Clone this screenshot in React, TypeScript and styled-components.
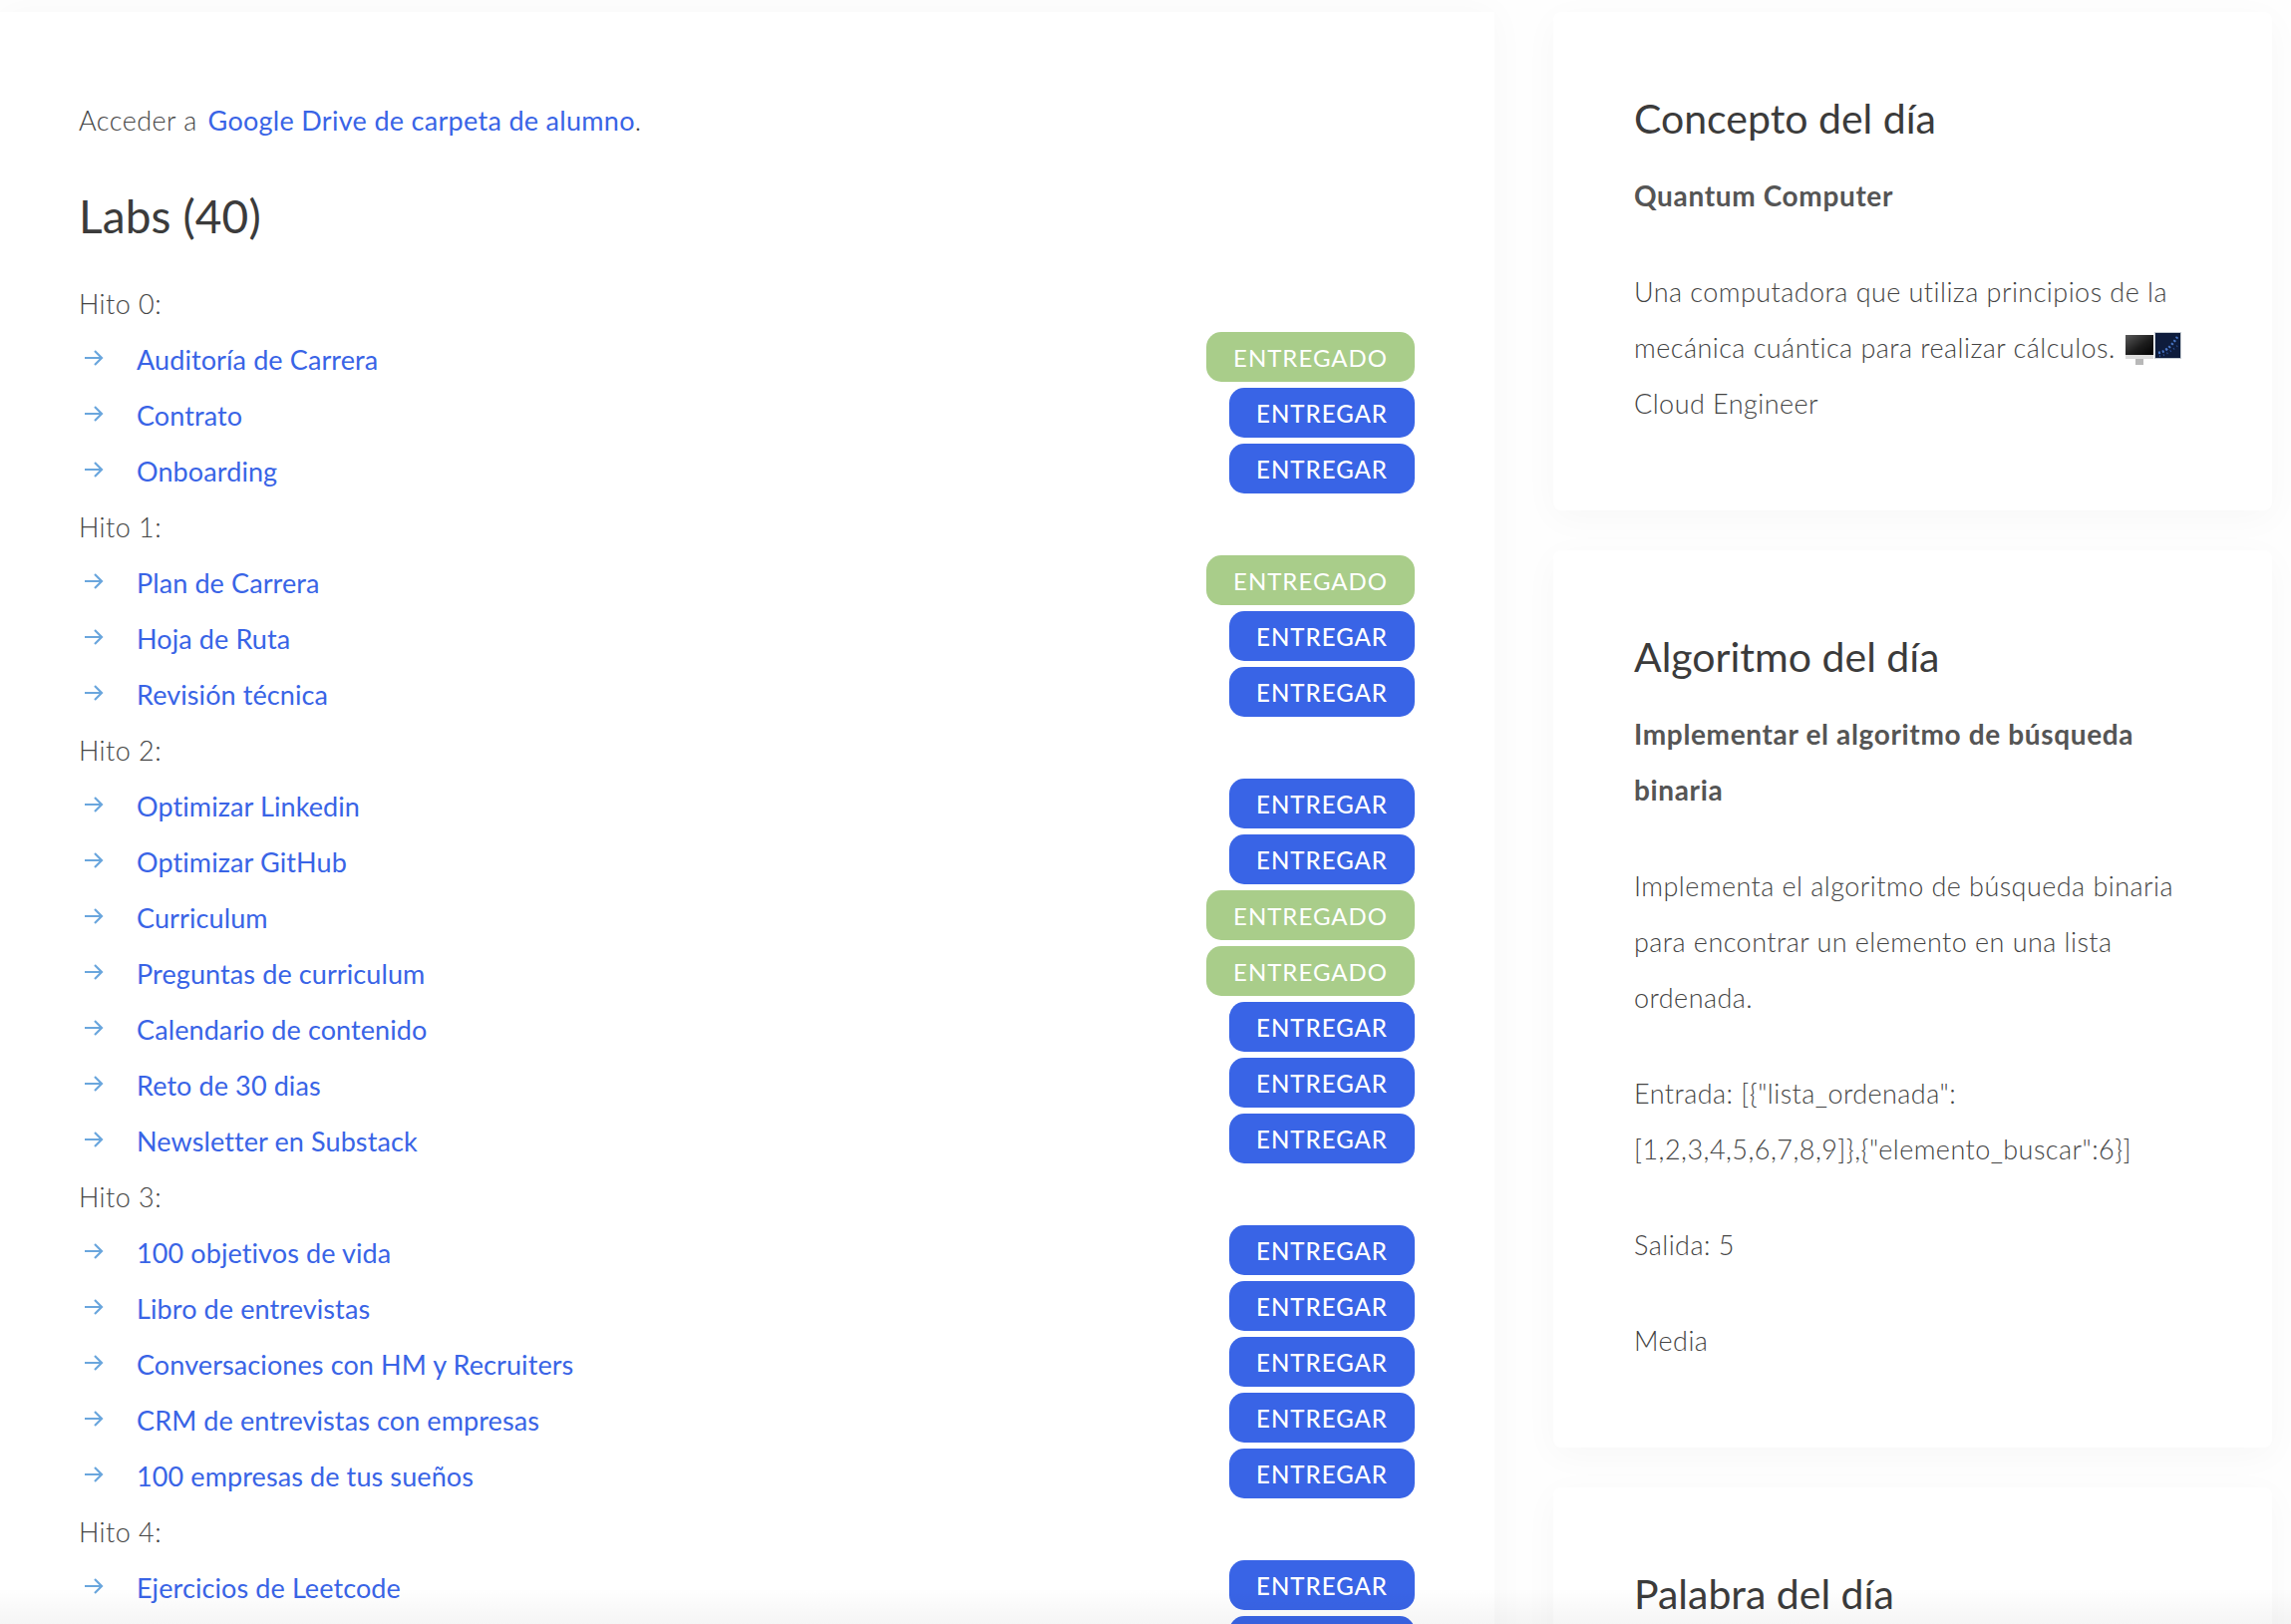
import { ReactElement } from "react";
import styled, { createGlobalStyle } from "styled-components";

const GlobalStyle = createGlobalStyle`
  html, body {
    margin: 0;
    height: 100%;
    overflow: hidden;
    background: #fefefe;
  }
  body {
    font-family: "Lato", "Liberation Sans", sans-serif;
    font-size: 27px;
    font-weight: 300;
    letter-spacing: 0.45px;
    line-height: 56px;
    color: #444444;
  }
  p, h2, h3 {
    margin: 0;
  }
`;

const Page = styled.div`
  position: relative;
  display: grid;
  grid-template-columns: 1499px 1fr;
  height: 1629px;
  padding-top: 12px;
  box-sizing: border-box;
  overflow: hidden;
  background: #fefefe;
`;

const Main = styled.main`
  background: #ffffff;
  box-shadow: 0 0 36px rgba(0, 0, 0, 0.03);
  padding: 81px 80px 0 79px;
`;

const Aside = styled.aside`
  display: flex;
  flex-direction: column;
  gap: 40px;
  padding: 0 19px 0 59px;
`;

const Card = styled.section`
  background: #ffffff;
  border-radius: 8px;
  box-shadow: 0 8px 36px rgba(0, 0, 0, 0.03);
  padding: 79px 60px 79px 81px;
`;

const PageTitle = styled.h2`
  font-size: 46px;
  font-weight: 400;
  letter-spacing: 0.1px;
  line-height: 56px;
  color: #3b3b3b;
  margin: 40px 0 32px;
`;

const CardTitle = styled.h3`
  font-size: 41px;
  font-weight: 400;
  letter-spacing: 0;
  line-height: 56px;
  color: #3b3b3b;
  margin-bottom: 21px;
`;

const Lead = styled.p`
  font-size: 28px;
  font-weight: 700;
  letter-spacing: 0.65px;
  color: #555555;
  margin-bottom: 41px;
`;

const Paragraph = styled.p<{ $last?: boolean }>`
  margin-bottom: ${(p) => (p.$last ? 0 : "40px")};
`;

const Link = styled.a`
  color: #3964e6;
  font-weight: 400;
  letter-spacing: 0.1px;
  text-decoration: none;
`;

const DriveLink = styled(Link)`
  margin-left: 3px;
  letter-spacing: 0.3px;
`;

const Row = styled.div`
  display: flex;
  justify-content: space-between;
  align-items: flex-start;
  height: 56px;
`;

const RowLabel = styled.div`
  display: flex;
  align-items: center;
  height: 56px;
`;

const Arrow = styled.svg`
  width: 20px;
  height: 18px;
  margin: -4px 33px 0 5px;
  flex: none;
`;

const DeliverButton = styled.button<{ $done?: boolean }>`
  height: 50px;
  padding: 0 27px;
  border: 0;
  border-radius: 15px;
  background: ${(p) => (p.$done ? "#a9cd8a" : "#3964e6")};
  color: #ffffff;
  font-family: inherit;
  font-size: 24px;
  font-weight: ${(p) => (p.$done ? 400 : 500)};
  letter-spacing: 1px;
  line-height: 52px;
`;

const Emoji = styled.svg`
  width: 56px;
  height: 34px;
  margin-left: 10px;
  vertical-align: -8px;
`;

const BottomFade = styled.div`
  position: absolute;
  left: 0;
  right: 0;
  bottom: 0;
  height: 36px;
  background: linear-gradient(rgba(0, 0, 0, 0), rgba(0, 0, 0, 0.04));
  pointer-events: none;
`;

type Item = { name: string; done?: boolean };
type Group = { title: string; items: Item[] };

const groups: Group[] = [
  {
    title: "Hito 0:",
    items: [{ name: "Auditoría de Carrera", done: true }, { name: "Contrato" }, { name: "Onboarding" }],
  },
  {
    title: "Hito 1:",
    items: [{ name: "Plan de Carrera", done: true }, { name: "Hoja de Ruta" }, { name: "Revisión técnica" }],
  },
  {
    title: "Hito 2:",
    items: [
      { name: "Optimizar Linkedin" },
      { name: "Optimizar GitHub" },
      { name: "Curriculum", done: true },
      { name: "Preguntas de curriculum", done: true },
      { name: "Calendario de contenido" },
      { name: "Reto de 30 dias" },
      { name: "Newsletter en Substack" },
    ],
  },
  {
    title: "Hito 3:",
    items: [
      { name: "100 objetivos de vida" },
      { name: "Libro de entrevistas" },
      { name: "Conversaciones con HM y Recruiters" },
      { name: "CRM de entrevistas con empresas" },
      { name: "100 empresas de tus sueños" },
    ],
  },
  {
    title: "Hito 4:",
    items: [{ name: "Ejercicios de Leetcode" }, { name: "" }],
  },
];

function LabRow({ name, done }: Item): ReactElement {
  return (
    <Row>
      <RowLabel>
        {name && (
          <Arrow viewBox="0 0 20 18" fill="none" stroke="#6aa6dd" strokeWidth="2.2">
            <path d="M1 9h17M11 2l7 7-7 7" />
          </Arrow>
        )}
        <Link href="#">{name}</Link>
      </RowLabel>
      <DeliverButton $done={done}>{done ? "ENTREGADO" : "ENTREGAR"}</DeliverButton>
    </Row>
  );
}

function ComputerEmoji(): ReactElement {
  return (
    <Emoji viewBox="0 0 56 34">
      <defs>
        <linearGradient id="screen" x1="0" y1="0" x2="1" y2="1">
          <stop offset="0" stopColor="#5a5a5a" />
          <stop offset="0.55" stopColor="#1c1c1c" />
          <stop offset="1" stopColor="#000000" />
        </linearGradient>
      </defs>
      <rect x="0" y="3" width="28" height="20" fill="url(#screen)" />
      <rect x="0" y="23" width="28" height="4" fill="#dcdcdc" />
      <rect x="10" y="27" width="8" height="6" fill="#b8b8b8" />
      <rect x="29.5" y="0.5" width="26" height="26" fill="#0e1c3c" stroke="#c5ccd2" />
      <path d="M33 21c6-1 12-5 19-16" stroke="#4a78c8" strokeWidth="2.5" fill="none" strokeDasharray="2 2" />
      <path d="M34 24c5 0 12-5 18-10" stroke="#2c4f96" strokeWidth="2" fill="none" strokeDasharray="1 3" />
    </Emoji>
  );
}

export default function App(): ReactElement {
  return (
    <>
      <GlobalStyle />
      <Page>
        <Main>
          <p>
            Acceder a <DriveLink href="#">Google Drive de carpeta de alumno</DriveLink>.
          </p>
          <PageTitle>Labs (40)</PageTitle>
          {groups.map((group) => (
            <div key={group.title}>
              <Row>{group.title}</Row>
              {group.items.map((item) => (
                <LabRow key={item.name} {...item} />
              ))}
            </div>
          ))}
        </Main>
        <Aside>
          <Card>
            <CardTitle>Concepto del día</CardTitle>
            <Lead>Quantum Computer</Lead>
            <Paragraph $last>
              Una computadora que utiliza principios de la
              <br />
              mecánica cuántica para realizar cálculos.
              <ComputerEmoji />
              <br />
              Cloud Engineer
            </Paragraph>
          </Card>
          <Card>
            <CardTitle>Algoritmo del día</CardTitle>
            <Lead>
              Implementar el algoritmo de búsqueda
              <br />
              binaria
            </Lead>
            <Paragraph>
              Implementa el algoritmo de búsqueda binaria
              <br />
              para encontrar un elemento en una lista
              <br />
              ordenada.
            </Paragraph>
            <Paragraph>
              Entrada: [{'{"lista_ordenada":'}
              <br />
              {'[1,2,3,4,5,6,7,8,9]},{"elemento_buscar":6}]'}
            </Paragraph>
            <Paragraph>Salida: 5</Paragraph>
            <Paragraph $last>Media</Paragraph>
          </Card>
          <Card>
            <CardTitle>Palabra del día</CardTitle>
          </Card>
        </Aside>
        <BottomFade />
      </Page>
    </>
  );
}
